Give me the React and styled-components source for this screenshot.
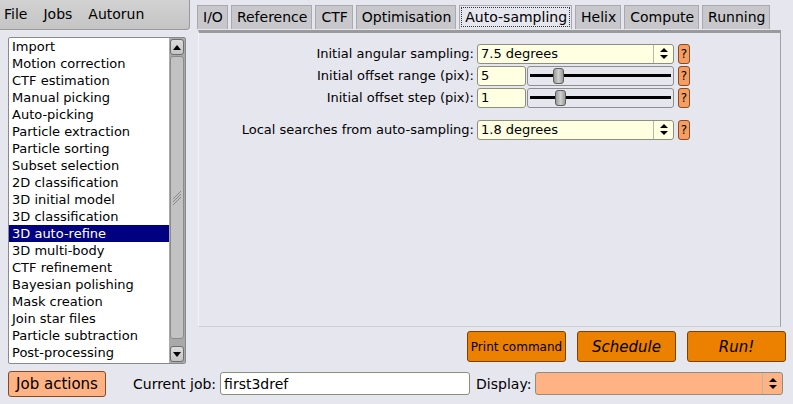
import React from 'react';
import styled, { createGlobalStyle } from 'styled-components';

const GlobalStyle = createGlobalStyle`
  html, body {
    margin: 0;
    padding: 0;
    background: #e6e6ef;
    font-family: "DejaVu Sans", "Liberation Sans", sans-serif;
    font-size: 13px;
    color: #000;
  }
  * { box-sizing: border-box; }
`;

const Window = styled.div`
  width: 793px;
  height: 404px;
  display: flex;
  flex-direction: column;
  background: #e6e6ef;
  overflow: hidden;
`;

const Top = styled.div`
  display: flex;
  height: 367px;
`;

const LeftColumn = styled.div`
  width: 190px;
  display: flex;
  flex-direction: column;
`;

const MenuBar = styled.div`
  height: 30px;
  display: flex;
  align-items: center;
  gap: 16px;
  padding: 0 0 2px 4px;
  background: linear-gradient(#d2d2d2, #c4c4c4);
  border: 1px solid #9a9a9a;
  border-top: none;
  border-left: none;
  border-bottom-right-radius: 4px;
  font-size: 14px;
`;

const JobList = styled.div`
  margin: 7px 0 0 8px;
  width: 178px;
  height: 327px;
  display: flex;
  background: #fff;
  border: 1px solid #8a8a8a;
  border-radius: 2px;
`;

const Items = styled.div`
  flex: 1;
  display: flex;
  flex-direction: column;
`;

const Item = styled.div`
  height: 17px;
  line-height: 17px;
  padding-left: 3px;
  white-space: nowrap;
  background: ${(p) => (p.$selected ? '#000080' : 'transparent')};
  color: ${(p) => (p.$selected ? '#fff' : '#000')};
`;

const ScrollBar = styled.div`
  width: 16px;
  display: flex;
  flex-direction: column;
  gap: 1px;
  padding: 1px;
  background: #a9a9a9;
`;

const ScrollButton = styled.div`
  height: 16px;
  display: flex;
  align-items: center;
  justify-content: center;
  background: linear-gradient(#dcdcdc, #c4c4c4);
  border: 1px solid #6e6e6e;
  border-radius: 3px;
`;

const Thumb = styled.div`
  flex: 1;
  margin-bottom: 6px;
  display: flex;
  align-items: center;
  justify-content: center;
  background: #c2c2c2;
  border: 1px solid #8a8a8a;
  border-radius: 3px;
`;

const RightColumn = styled.div`
  flex: 1;
  display: flex;
  flex-direction: column;
  padding-left: 7px;
`;

const TabRow = styled.div`
  display: flex;
  gap: 3px;
  margin-top: 5px;
  height: 24px;
`;

const Tab = styled.div`
  height: 24px;
  line-height: 22px;
  padding: 0 4px 0 5px;
  font-size: 14px;
  background: ${(p) => (p.$active ? '#e6e6ef' : '#c8c8cc')};
  border: 1px solid #a8a8ae;
  border-bottom: none;
  outline: ${(p) => (p.$active ? '1px dotted #333' : 'none')};
  outline-offset: -3px;
`;

const Panel = styled.div`
  width: 583px;
  height: 297px;
  margin-left: 1px;
  margin-top: 1px;
  padding: 11px 0 0 0;
  border-top: 3px solid #9a9a9a;
  border-right: 1px solid #a0a0a8;
  border-bottom: 1px solid #cfcfd8;
  border-left: 1px solid #f4f4f8;
  display: flex;
  flex-direction: column;
  gap: 3px;
`;

const Row = styled.div`
  display: flex;
  align-items: center;
  height: 19px;
  margin-top: ${(p) => p.$gap || 0}px;
`;

const Label = styled.div`
  width: 278px;
  text-align: right;
  padding-right: 3px;
  white-space: nowrap;
`;

const Field = styled.div`
  height: 20px;
  width: ${(p) => p.$w}px;
  display: flex;
  align-items: center;
  background: ${(p) => p.$bg || '#ffffe2'};
  border: 1px solid #8e8e80;
  border-radius: 3px;
  padding-left: 3px;
  white-space: nowrap;
`;

const ChoiceText = styled.div`
  flex: 1;
`;

const ChoiceArrows = styled.div`
  width: 20px;
  height: 100%;
  display: flex;
  align-items: center;
  justify-content: center;
  border-left: 1px solid #b8b8a8;
`;

const Slider = styled.div`
  width: 147px;
  height: 20px;
  margin-left: 1px;
  position: relative;
  border: 1px solid #8e8e8e;
  border-radius: 3px;
  display: flex;
  align-items: center;
  padding: 0 2px;
`;

const Track = styled.div`
  flex: 1;
  height: 3px;
  background: #000;
`;

const Knob = styled.div`
  position: absolute;
  top: 1px;
  width: 11px;
  height: 16px;
  background: linear-gradient(90deg, #9c9c9c, #cfcfcf 50%, #9c9c9c);
  border: 1px solid #5e5e5e;
  border-radius: 3px;
`;

const Help = styled.div`
  width: 12px;
  height: 20px;
  margin-left: 4px;
  display: flex;
  align-items: center;
  justify-content: center;
  background: #f49e64;
  border: 1px solid #8a4a20;
  border-radius: 3px;
  font-size: 12px;
`;

const ActionRow = styled.div`
  display: flex;
  justify-content: flex-end;
  gap: 11px;
  margin-top: 4px;
  padding-right: 7px;
`;

const ActionButton = styled.div`
  width: 99px;
  height: 31px;
  display: flex;
  align-items: center;
  justify-content: center;
  background: #ec8100;
  border: 1px solid #7a4200;
  border-radius: 3px;
  font-size: ${(p) => p.$size || 15}px;
  font-style: ${(p) => (p.$italic ? 'italic' : 'normal')};
  white-space: nowrap;
`;

const Bottom = styled.div`
  display: flex;
  align-items: center;
  height: 37px;
  padding: 0 7px 4px 8px;
`;

const JobActions = styled.div`
  width: 98px;
  height: 26px;
  display: flex;
  align-items: center;
  justify-content: center;
  background: #ffb385;
  border: 1px solid #7e4a2a;
  border-radius: 3px;
  font-size: 15px;
`;

const BottomLabel = styled.div`
  margin-left: ${(p) => p.$ml}px;
  margin-right: 4px;
  font-size: 14px;
  white-space: nowrap;
`;

const updown = (
  <svg width="8" height="11" viewBox="0 0 8 11">
    <path d="M4 0 L8 4 L0 4 Z M0 7 L8 7 L4 11 Z" fill="#000" />
  </svg>
);

const jobs = [
  'Import',
  'Motion correction',
  'CTF estimation',
  'Manual picking',
  'Auto-picking',
  'Particle extraction',
  'Particle sorting',
  'Subset selection',
  '2D classification',
  '3D initial model',
  '3D classification',
  '3D auto-refine',
  '3D multi-body',
  'CTF refinement',
  'Bayesian polishing',
  'Mask creation',
  'Join star files',
  'Particle subtraction',
  'Post-processing',
];

const tabs = ['I/O', 'Reference', 'CTF', 'Optimisation', 'Auto-sampling', 'Helix', 'Compute', 'Running'];

function Choice({ value }) {
  return (
    <Field $w={197}>
      <ChoiceText>{value}</ChoiceText>
      <ChoiceArrows>{updown}</ChoiceArrows>
    </Field>
  );
}

function SliderInput({ value, pos }) {
  return (
    <>
      <Field $w={49}>{value}</Field>
      <Slider>
        <Track />
        <Knob style={{ left: pos }} />
      </Slider>
    </>
  );
}

export default function App() {
  return (
    <Window>
      <GlobalStyle />
      <Top>
        <LeftColumn>
          <MenuBar>
            <span>File</span>
            <span>Jobs</span>
            <span>Autorun</span>
          </MenuBar>
          <JobList>
            <Items>
              {jobs.map((j) => (
                <Item key={j} $selected={j === '3D auto-refine'}>
                  {j}
                </Item>
              ))}
            </Items>
            <ScrollBar>
              <ScrollButton>
                <svg width="8" height="5" viewBox="0 0 8 5">
                  <path d="M0 5 L4 0 L8 5 Z" fill="#000" />
                </svg>
              </ScrollButton>
              <Thumb>
                <svg width="10" height="16" viewBox="0 0 10 16">
                  <path d="M1 9 L9 1 M1 12 L9 4 M1 15 L9 7" stroke="#888" strokeWidth="1" />
                </svg>
              </Thumb>
              <ScrollButton>
                <svg width="8" height="5" viewBox="0 0 8 5">
                  <path d="M0 0 L8 0 L4 5 Z" fill="#000" />
                </svg>
              </ScrollButton>
            </ScrollBar>
          </JobList>
        </LeftColumn>
        <RightColumn>
          <TabRow>
            {tabs.map((t) => (
              <Tab key={t} $active={t === 'Auto-sampling'}>
                {t}
              </Tab>
            ))}
          </TabRow>
          <Panel>
            <Row>
              <Label>Initial angular sampling:</Label>
              <Choice value="7.5 degrees" />
              <Help>?</Help>
            </Row>
            <Row>
              <Label>Initial offset range (pix):</Label>
              <SliderInput value="5" pos={25} />
              <Help>?</Help>
            </Row>
            <Row>
              <Label>Initial offset step (pix):</Label>
              <SliderInput value="1" pos={27} />
              <Help>?</Help>
            </Row>
            <Row $gap={10}>
              <Label>Local searches from auto-sampling:</Label>
              <Choice value="1.8 degrees" />
              <Help>?</Help>
            </Row>
          </Panel>
          <ActionRow>
            <ActionButton $size={12}>Print command</ActionButton>
            <ActionButton $italic>Schedule</ActionButton>
            <ActionButton $italic>Run!</ActionButton>
          </ActionRow>
        </RightColumn>
      </Top>
      <Bottom>
        <JobActions>Job actions</JobActions>
        <BottomLabel $ml={27}>Current job:</BottomLabel>
        <Field $w={250} $bg="#fff" style={{ height: 23, fontSize: 14 }}>first3dref</Field>
        <BottomLabel $ml={6}>Display:</BottomLabel>
        <Field $w={248} $bg="#ffb385" style={{ height: 23 }}>
          <ChoiceText />
          <ChoiceArrows>{updown}</ChoiceArrows>
        </Field>
      </Bottom>
    </Window>
  );
}
